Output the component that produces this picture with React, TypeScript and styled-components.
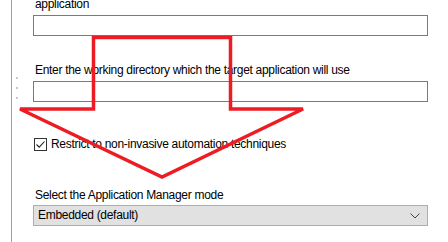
import React from 'react'
import styled, { createGlobalStyle } from 'styled-components'

const GlobalStyle = createGlobalStyle`
  html, body {
    margin: 0;
    padding: 0;
    background: #ffffff;
    overflow: hidden;
  }
  body {
    font-family: "Liberation Sans", Arial, sans-serif;
    font-size: 12px;
    letter-spacing: -0.3px;
    color: #000000;
  }
`

const Page = styled.div`
  position: relative;
  width: 448px;
  height: 242px;
  overflow: hidden;
  background: #ffffff;
`

const Panel = styled.div`
  position: relative;
  margin-left: 11px;
  height: 242px;
  border-left: 1px solid #a0a0a0;
  padding-left: 21px;
  box-sizing: border-box;
`

const Grip = styled.div`
  position: absolute;
  left: 4px;
  top: 77px;
  display: flex;
  flex-direction: column;
  gap: 8px;
`

const GripDot = styled.span`
  width: 2px;
  height: 2px;
  background: #c8c8c8;
`

const Form = styled.div`
  width: 395px;
  display: flex;
  flex-direction: column;
`

const Label = styled.div<{ $top: number }>`
  margin-top: ${({ $top }) => $top}px;
  padding-left: 2px;
  line-height: 15px;
  white-space: nowrap;
`

const TextBox = styled.div<{ $top: number }>`
  margin-top: ${({ $top }) => $top}px;
  height: 21px;
  border: 1px solid #7a7a7a;
  box-sizing: border-box;
  background: #ffffff;
`

const CheckRow = styled.label<{ $top: number }>`
  margin-top: ${({ $top }) => $top}px;
  display: flex;
  align-items: center;
  gap: 4px;
  line-height: 15px;
  margin-left: 1px;
`

const CheckBox = styled.span`
  width: 13px;
  height: 13px;
  box-sizing: border-box;
  border: 1px solid #333333;
  background: #ffffff;
  display: flex;
  align-items: center;
  justify-content: center;
`

const Select = styled.div<{ $top: number }>`
  margin-top: ${({ $top }) => $top}px;
  height: 21px;
  box-sizing: border-box;
  border: 1px solid #adadad;
  background: #e1e1e1;
  display: flex;
  align-items: center;
  justify-content: space-between;
  padding: 0 7px 0 4px;
  line-height: 15px;
`

const Arrow = styled.svg`
  position: absolute;
  left: 0;
  top: 0;
  pointer-events: none;
`

export default function App() {
  return (
    <Page>
      <GlobalStyle />
      <Panel>
        <Grip>
          <GripDot />
          <GripDot />
          <GripDot />
        </Grip>
        <Form>
          <Label $top={-3}>application</Label>
          <TextBox $top={3} />
          <Label $top={27}>Enter the working directory which the target application will use</Label>
          <TextBox $top={3} />
          <CheckRow $top={35}>
            <CheckBox>
              <svg width="11" height="11" viewBox="0 0 11 11">
                <path d="M1.5 5.5 L4.2 8.2 L9.5 2.5" fill="none" stroke="#222" strokeWidth="1.1" />
              </svg>
            </CheckBox>
            <span>Restrict to non-invasive automation techniques</span>
          </CheckRow>
          <Label $top={36}>Select the Application Manager mode</Label>
          <Select $top={2}>
            <span>Embedded (default)</span>
            <svg width="10" height="6" viewBox="0 0 10 6">
              <path d="M0.5 0.5 L5 5 L9.5 0.5" fill="none" stroke="#444" strokeWidth="1" />
            </svg>
          </Select>
        </Form>
      </Panel>
      <Arrow width="448" height="242" viewBox="0 0 448 242">
        <path
          d="M93.5 37.5 L230.5 37.5 L230.5 109 L303 109 L162 177 L20 109 L93.5 109 Z"
          fill="none"
          stroke="#ed1c24"
          strokeWidth="3.5"
          strokeLinejoin="miter"
        />
      </Arrow>
    </Page>
  )
}
